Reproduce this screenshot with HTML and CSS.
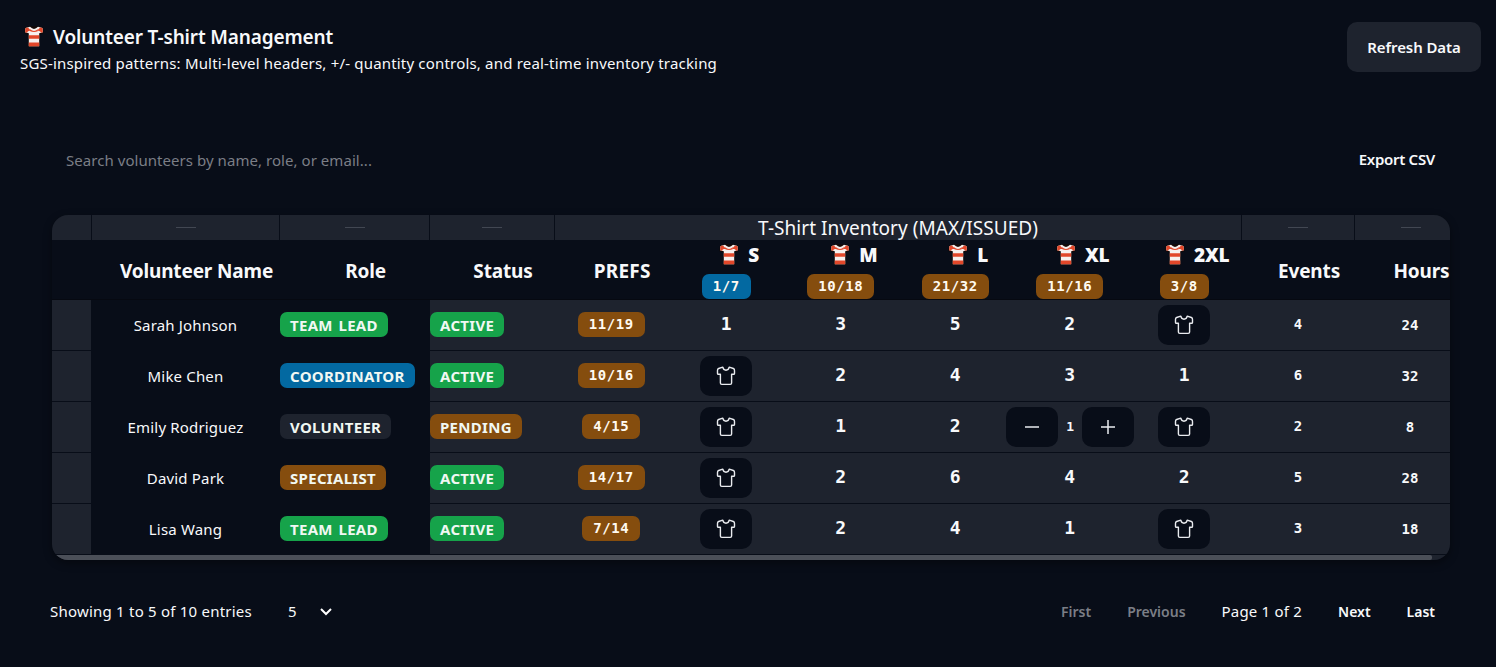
FILE: index.html
```html
<!DOCTYPE html>
<html lang="en">
<head>
<meta charset="utf-8">
<title>Volunteer T-shirt Management</title>
<link rel="stylesheet" href="styles.css">
</head>
<body>
<svg class="defs" aria-hidden="true">
  <symbol id="striped" viewBox="0 0 20 21">
    <path d="M1 1.500 6.500.3h7L19 1.500l.6 5.800-3.800 1V20.900H4.200V8.300L.4 7.300z" fill="#120806"/>
    <path d="M1.500 2 6 .8q4 4.200 8 0L18.500 2l.4 4.300-3.700.9V20.300H4.800V7.200L1.100 6.300z" fill="#f6f0ee"/>
    <path d="M1.500 2 4 1.400 6.500 4.200 3.800 5.500 3 6.800 1.100 6.300zM18.500 2 16 1.400 13.500 4.200 16.200 5.500 17 6.800 18.900 6.300zM6.200 3.300q3.800 3.200 7.600 0l.4 1.600q-4.200 2.300-8.400 0zM4.800 9.300h10.400v3.400H4.800zM4.800 16.500h10.400v3.800H4.800z" fill="#e2472a"/>
  </symbol>
  <symbol id="shirt" viewBox="0 0 20 20">
    <path d="M6.800 1.200 2.600 2.500Q1.400 3 1.500 4.400v3q0 .8.900.8h2v8.800q0 1.400 1.400 1.400h8.400q1.400 0 1.400-1.400V8.200h2q.9 0 .9-.8v-3q.1-1.400-1.100-1.900l-4.200-1.300q-.5 3-3.200 3t-3.200-3z" fill="none" stroke="#e9ebef" stroke-width="1.400" stroke-linejoin="round"/>
  </symbol>
</svg>

<header class="page-head">
  <div>
    <h1><svg class="striped"><use href="#striped"/></svg><span>Volunteer T-shirt Management</span></h1>
    <p>SGS-inspired patterns: Multi-level headers, +/- quantity controls, and real-time inventory tracking</p>
  </div>
  <button class="refresh">Refresh Data</button>
</header>

<main>
  <div class="toolbar">
    <span class="search">Search volunteers by name, role, or email...</span>
    <button class="export">Export CSV</button>
  </div>

  <section class="card">
    <div class="grid groups">
      <div></div><div><i></i></div><div><i></i></div><div><i></i></div>
      <div class="inventory">T-Shirt Inventory (MAX/ISSUED)</div>
      <div><i></i></div><div><i></i></div>
    </div>
    <div class="grid heads">
      <div></div><div>Volunteer Name</div><div>Role</div><div>Status</div><div class="prefs-h">PREFS</div>
      <div class="size"><b><svg class="striped"><use href="#striped"/></svg>S</b><span class="badge mono info">1/7</span></div>
      <div class="size"><b><svg class="striped"><use href="#striped"/></svg>M</b><span class="badge mono warn">10/18</span></div>
      <div class="size"><b><svg class="striped"><use href="#striped"/></svg>L</b><span class="badge mono warn">21/32</span></div>
      <div class="size"><b><svg class="striped"><use href="#striped"/></svg>XL</b><span class="badge mono warn">11/16</span></div>
      <div class="size"><b><svg class="striped"><use href="#striped"/></svg>2XL</b><span class="badge mono warn">3/8</span></div>
      <div>Events</div><div>Hours</div>
    </div>

    <div class="grid row">
      <div></div><div class="name">Sarah Johnson</div><div class="role"><span class="badge ok">TEAM LEAD</span></div><div class="status"><span class="badge ok">ACTIVE</span></div><div class="prefs"><span class="badge mono warn">11/19</span></div>
      <div class="qty">1</div><div class="qty">3</div><div class="qty">5</div><div class="qty">2</div><div><button class="tile"><svg><use href="#shirt"/></svg></button></div>
      <div class="num">4</div><div class="num hours">24</div>
    </div>
    <div class="grid row">
      <div></div><div class="name">Mike Chen</div><div class="role"><span class="badge info">COORDINATOR</span></div><div class="status"><span class="badge ok">ACTIVE</span></div><div class="prefs"><span class="badge mono warn">10/16</span></div>
      <div><button class="tile"><svg><use href="#shirt"/></svg></button></div><div class="qty">2</div><div class="qty">4</div><div class="qty">3</div><div class="qty">1</div>
      <div class="num">6</div><div class="num hours">32</div>
    </div>
    <div class="grid row">
      <div></div><div class="name">Emily Rodriguez</div><div class="role"><span class="badge plain">VOLUNTEER</span></div><div class="status"><span class="badge warn">PENDING</span></div><div class="prefs"><span class="badge mono warn">4/15</span></div>
      <div><button class="tile"><svg><use href="#shirt"/></svg></button></div><div class="qty">1</div><div class="qty">2</div>
      <div class="stepper"><button class="tile"><svg viewBox="0 0 20 20"><path class="sign" d="M3 10h14"/></svg></button><span>1</span><button class="tile"><svg viewBox="0 0 20 20"><path class="sign" d="M3 10h14M10 3v14"/></svg></button></div>
      <div><button class="tile"><svg><use href="#shirt"/></svg></button></div>
      <div class="num">2</div><div class="num hours">8</div>
    </div>
    <div class="grid row">
      <div></div><div class="name">David Park</div><div class="role"><span class="badge warn">SPECIALIST</span></div><div class="status"><span class="badge ok">ACTIVE</span></div><div class="prefs"><span class="badge mono warn">14/17</span></div>
      <div><button class="tile"><svg><use href="#shirt"/></svg></button></div><div class="qty">2</div><div class="qty">6</div><div class="qty">4</div><div class="qty">2</div>
      <div class="num">5</div><div class="num hours">28</div>
    </div>
    <div class="grid row">
      <div></div><div class="name">Lisa Wang</div><div class="role"><span class="badge ok">TEAM LEAD</span></div><div class="status"><span class="badge ok">ACTIVE</span></div><div class="prefs"><span class="badge mono warn">7/14</span></div>
      <div><button class="tile"><svg><use href="#shirt"/></svg></button></div><div class="qty">2</div><div class="qty">4</div><div class="qty">1</div><div><button class="tile"><svg><use href="#shirt"/></svg></button></div>
      <div class="num">3</div><div class="num hours">18</div>
    </div>
    <div class="scroll"><div class="thumb"></div></div>
  </section>

  <footer>
    <span class="showing">Showing 1 to 5 of 10 entries</span>
    <span class="page-size">5<svg viewBox="0 0 14 10"><path d="M2 2l5 5 5-5"/></svg></span>
    <nav>
      <button disabled>First</button>
      <button disabled>Previous</button>
      <span>Page 1 of 2</span>
      <button>Next</button>
      <button>Last</button>
    </nav>
  </footer>
</main>
</body>
</html>
```
FILE: styles.css
```css
* { box-sizing: border-box; }
body {
  margin: 0; height: 667px; overflow: hidden;
  background: #080d18; color: #f8f9fb;
  font: 15px/24px "Noto Sans", sans-serif;
}
button { border: 0; padding: 0; background: none; color: inherit; font: inherit; }
.defs { position: absolute; width: 0; height: 0; }

.page-head { display: flex; justify-content: space-between; padding: 22px 15px 0 20px; height: 136px; }
h1 { display: flex; align-items: center; margin: 2px 0 0; padding-left: 4px; gap: 9px; font-size: 19px; font-weight: 600; line-height: 26px; letter-spacing: -.15px; }
h1 .striped { margin-top: -1px; }
.striped { display: block; width: 20px; height: 21px; flex: none; }
p { margin: 1px 0 0; letter-spacing: .185px; }
.refresh { width: 134px; height: 50px; border-radius: 10px; background: #1e232e; font-weight: 600; letter-spacing: -.08px; }

main { padding: 0 46px 0 52px; }
.toolbar { display: flex; justify-content: space-between; align-items: center; height: 48px; padding: 0 15px 0 14px; margin-bottom: 31px; }
.search { color: #7b7e86; letter-spacing: .05px; }
.export { font-weight: 600; letter-spacing: -.3px; margin-top: -2px; }

.card { width: 1398px; height: 345px; overflow: hidden; border-radius: 16px; box-shadow: 0 3px 8px #0006; }
.grid { display: grid; grid-template-columns: 40px 188px 150px 125px repeat(6, 114.5px) 113px 112px; width: 1415px; }
.grid > div { display: flex; align-items: center; justify-content: center; min-width: 0; }
.groups { height: 25px; background: #1e232e; }
.groups > div { border-right: 1px solid #080d18; }
.grid.groups > div { padding: 0 0 1px; align-items: flex-start; }
.groups i { width: 20px; height: 1px; margin-top: 12px; background: #424752; }
.groups .inventory { grid-column: span 6; font-size: 19px; letter-spacing: .05px; line-height: 27px; }
.heads { height: 60px; font-size: 19px; font-weight: 700; letter-spacing: -.15px; border-bottom: 1px solid #060911; }
.heads > div { padding: 3px 0 0 21px; }
.heads .prefs-h { letter-spacing: .2px; padding-left: 20px; }
.heads > .size { flex-direction: column; padding: 1px 1px 0 0; }
.size b { display: flex; gap: 9px; line-height: 27px; padding-left: 26px; height: 29px; align-items: center; }
.size .striped { margin-top: -2px; }
.size .badge { margin-top: 4px; }

.row { height: 51px; }
.row > div { background: #1e232e; border-bottom: 1px solid #080d18; padding-right: 2px; }
.row > div:first-child { border-right: 1px solid #080d18; }
.row > .name, .row > .role { background: #080d18; }
.row > .name { letter-spacing: .17px; padding-right: 1px; }
.row > .role, .row > .status { justify-content: flex-start; }
.row > .role, .row > .status, .row > .name, .row > .prefs { padding-bottom: 1px; }
.badge { height: 25px; padding: 0 10px; border-radius: 7px; font-weight: 700; line-height: 26px; letter-spacing: .3px; word-spacing: 1.5px; color: #f1f8f3; }
.badge.mono { line-height: 24px; padding: 0 11px; }
.mono { font-family: "DejaVu Sans Mono", monospace; font-size: 14px; letter-spacing: .57px; color: #fffaf0; }
.ok { background: #16a34a; }
.info { background: #0369a1; }
.warn { background: #854d0e; }
.plain { background: #1e232e; }
.row > .qty { font-size: 18px; font-weight: 700; padding: 0 1px 3px 0; }
.row > .num { font-size: 14px; font-weight: 700; padding: 0 1px 2px 0; }
.row > .hours { padding: 0 2px 1px 0; }
.qty, .num, .stepper { font-family: "DejaVu Sans Mono", monospace; }
.tile { display: grid; place-items: center; flex: none; width: 52px; height: 40px; border-radius: 10px; background: #080d18; }
.tile svg { width: 20px; height: 20px; }
.sign { stroke: #e9ebef; stroke-width: 1.500; }
.row > .stepper { position: relative; z-index: 1; gap: 8px; padding-right: 0; font-size: 13px; font-weight: 700; }
.scroll { height: 5px; background: #1e232e; }
.thumb { width: 1380px; height: 5px; border-radius: 2px; background: #4b4f58; }

footer { display: flex; align-items: center; height: 40px; margin: 31px 0 0 -2px; }
.showing { letter-spacing: .22px; }
.page-size { display: flex; align-items: center; gap: 22px; margin-left: 36px; }
.page-size svg { width: 14px; height: 10px; margin-top: 2px; }
.page-size path { fill: none; stroke: #fff; stroke-width: 2; }
nav { display: flex; gap: 36px; margin-left: auto; padding-right: 15px; }
nav button { font-size: 14px; font-weight: 600; line-height: 25px; }
nav button:disabled { color: #7b7e86; }
nav span { letter-spacing: .2px; }
```
